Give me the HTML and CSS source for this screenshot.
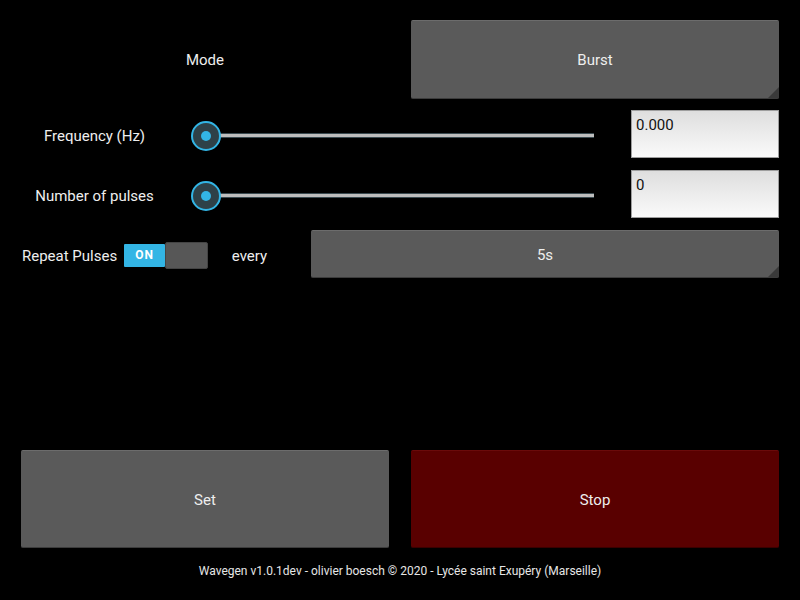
FILE: index.html
```html
<!DOCTYPE html>
<html>
<head>
<meta charset="utf-8">
<link rel="stylesheet" href="styles.css">
</head>
<body>
<div class="app">
  <div class="row row-mode">
    <div class="label mode-label">Mode</div>
    <div class="btn spinner mode-btn">Burst</div>
  </div>
  <div class="row row-param">
    <div class="label param-label">Frequency (Hz)</div>
    <div class="slider"><div class="track"></div><div class="thumb"><div class="dot"></div></div></div>
    <div class="input">0.000</div>
  </div>
  <div class="row row-param">
    <div class="label param-label">Number of pulses</div>
    <div class="slider"><div class="track"></div><div class="thumb"><div class="dot"></div></div></div>
    <div class="input">0</div>
  </div>
  <div class="row row-repeat">
    <div class="label repeat-label">Repeat Pulses</div>
    <div class="switch"><div class="sw-on">ON</div><div class="sw-off"></div></div>
    <div class="label every-label">every</div>
    <div class="btn spinner every-btn">5s</div>
  </div>
  <div class="spacer"></div>
  <div class="row row-actions">
    <div class="btn action">Set</div>
    <div class="btn action stop">Stop</div>
  </div>
  <div class="footer">Wavegen v1.0.1dev - olivier boesch © 2020 - Lycée saint Exupéry (Marseille)</div>
</div>
</body>
</html>
```

FILE: styles.css
```css
html, body {
  margin: 0;
  padding: 0;
  background: #000;
}
body {
  font-family: Roboto, "Noto Sans", sans-serif;
  font-size: 15px;
  color: #eeeeee;
}
.app {
  width: 800px;
  height: 600px;
  box-sizing: border-box;
  padding: 20px 21px 6px 21px;
  display: flex;
  flex-direction: column;
}
.row {
  display: flex;
  align-items: center;
}
.label {
  display: flex;
  align-items: center;
  justify-content: center;
  white-space: nowrap;
  box-sizing: border-box;
  padding-top: 2px;
}
.btn {
  position: relative;
  display: flex;
  align-items: center;
  justify-content: center;
  background: #5a5a5a;
  border-top: 1px solid #6c6c6c;
  border-bottom: 1px solid #3c3c3c;
  border-radius: 2px;
  box-sizing: border-box;
  color: #eeeeee;
  padding-top: 2px;
}
.spinner::after {
  content: "";
  position: absolute;
  right: 0;
  bottom: 0;
  width: 0;
  height: 0;
  border-style: solid;
  border-width: 0 0 11px 11px;
  border-color: transparent transparent #3a3a3a transparent;
}
.row-mode {
  height: 79px;
  margin-bottom: 11px;
}
.mode-label {
  width: 368px;
  height: 100%;
  padding-top: 0;
}
.mode-btn {
  margin-left: 22px;
  width: 368px;
  height: 100%;
  padding-top: 0;
}
.row-param {
  height: 48px;
  margin-bottom: 12px;
}
.param-label {
  width: 147px;
  height: 100%;
  padding-top: 3px;
}
.slider {
  position: relative;
  margin-left: 22px;
  width: 420px;
  height: 100%;
}
.track {
  position: absolute;
  left: 16px;
  right: 16px;
  top: 23px;
  height: 3px;
  background: #bdbdbd;
  border-top: 1px solid #3a4a50;
  border-bottom: 1px solid #3a4a50;
}
.thumb {
  position: absolute;
  left: 1px;
  top: 11px;
  width: 26px;
  height: 26px;
  border-radius: 50%;
  border: 2px solid #33b5e5;
  background: #2e4148;
  display: flex;
  align-items: center;
  justify-content: center;
}
.dot {
  width: 10px;
  height: 10px;
  border-radius: 50%;
  background: #33b5e5;
}
.input {
  margin-left: 21px;
  width: 148px;
  height: 100%;
  box-sizing: border-box;
  border: 1px solid #9e9e9e;
  background: linear-gradient(#dedede, #fafafa);
  color: #111;
  padding: 5px 4px;
  line-height: 18px;
}
.row-repeat {
  height: 48px;
}
.repeat-label {
  justify-content: flex-start;
  width: 103px;
  height: 100%;
  padding-left: 1px;
  padding-top: 3px;
}
.switch {
  display: flex;
  align-items: center;
  width: 84px;
  height: 27px;
  margin-top: 2px;
}
.sw-on {
  width: 41px;
  height: 23px;
  background: #33b5e5;
  color: #fff;
  font-size: 12px;
  font-weight: bold;
  letter-spacing: 1px;
  display: flex;
  align-items: center;
  justify-content: center;
  border-radius: 1px;
}
.sw-off {
  width: 43px;
  height: 27px;
  background: #575757;
  border-radius: 2px;
  box-sizing: border-box;
  border: 1px solid #444;
}
.every-label {
  width: 83px;
  height: 100%;
  padding-top: 3px;
}
.every-btn {
  margin-left: 20px;
  width: 468px;
  height: 100%;
}
.spacer {
  flex: 1;
}
.row-actions {
  height: 98px;
  justify-content: space-between;
}
.action {
  width: 368px;
  height: 100%;
}
.stop {
  background: #590000;
  border-top: 1px solid #6a0a0a;
  border-bottom: 1px solid #3a0000;
}
.footer {
  height: 46px;
  display: flex;
  align-items: center;
  justify-content: center;
  font-size: 12px;
  color: #e6e6e6;
}
```
